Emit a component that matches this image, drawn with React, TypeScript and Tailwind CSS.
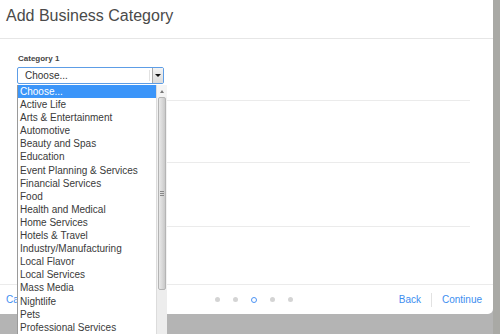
import React from 'react';

const categories = [
  'Active Life',
  'Arts & Entertainment',
  'Automotive',
  'Beauty and Spas',
  'Education',
  'Event Planning & Services',
  'Financial Services',
  'Food',
  'Health and Medical',
  'Home Services',
  'Hotels & Travel',
  'Industry/Manufacturing',
  'Local Flavor',
  'Local Services',
  'Mass Media',
  'Nightlife',
  'Pets',
  'Professional Services',
  'Public Services & Government',
  'Real Estate',
];

const Dots: React.FC = () => (
  <div className="flex items-center gap-[13px]">
    <span className="w-[5px] h-[5px] rounded-full bg-[#d4d4d4]" />
    <span className="w-[5px] h-[5px] rounded-full bg-[#d4d4d4]" />
    <span className="w-[6px] h-[6px] rounded-full border border-[#4d94f5]" />
    <span className="w-[5px] h-[5px] rounded-full bg-[#d4d4d4]" />
    <span className="w-[5px] h-[5px] rounded-full bg-[#d4d4d4]" />
  </div>
);

const Dropdown: React.FC = () => (
  <div className="absolute left-[17px] top-[85px] w-[150px] h-[260px] flex bg-white border-l border-[#9a9a9a]">
    <div className="w-[139px] flex flex-col">
      <div className="h-[13.1px] leading-[13.1px] pl-[2px] bg-[#3b95f9] text-white">Choose...</div>
      {categories.map((c) => (
        <div key={c} className="h-[13.1px] leading-[13.1px] pl-[2px] text-[#3a3a3a] whitespace-nowrap">
          {c}
        </div>
      ))}
    </div>
    <div className="w-[11px] flex flex-col bg-[#f1f1f1] border-l border-[#dcdcdc]">
      <div className="h-[12px] flex items-center justify-center bg-[#f4f4f4]">
        <span className="w-0 h-0 border-l-[2px] border-r-[2px] border-b-[3px] border-l-transparent border-r-transparent border-b-[#777]" />
      </div>
      <div className="h-[193px] mx-[1px] rounded-[2px] border border-[#b4b4b4] bg-gradient-to-r from-[#e9e9e9] via-[#dadada] to-[#c9c9c9] flex flex-col items-center justify-center gap-[1px]">
        <span className="w-[4px] h-px bg-[#888]" />
        <span className="w-[4px] h-px bg-[#888]" />
        <span className="w-[4px] h-px bg-[#888]" />
      </div>
      <div className="flex-1 bg-[#ededed]" />
    </div>
  </div>
);

export default function App() {
  return (
    <div
      className="w-[500px] h-[334px] bg-[#b4b4b4] flex overflow-hidden relative text-[10px]"
      style={{ fontFamily: '"Liberation Sans", Arial, sans-serif' }}
    >
      <div className="w-[493px] h-[314px] bg-white rounded-br-[5px] flex flex-col relative shrink-0">
        <div className="h-[39px] border-b border-[#e6e6e6] pl-[6px] pt-[6px] text-[16px] leading-[20px] text-[#4a4a4a]">
          Add Business Category
        </div>
        <div className="flex flex-col pl-[17px] pr-[23px]">
          <div className="h-[62px] border-b border-[#ebebeb] pt-[15px]">
            <div className="text-[8px] leading-[10px] font-bold text-[#444] pl-px">Category 1</div>
            <div className="mt-[3px] w-[147px] h-[17px] border border-[#5d9de6] rounded-[2px] flex items-center bg-white">
              <span className="flex-1 pl-[7px] text-[#333] leading-[14px]">Choose...</span>
              <span className="w-px h-[11px] bg-[#e2e2e2] mr-[2px]" />
              <span className="w-[11px] h-[15px] flex items-center justify-center bg-gradient-to-b from-[#f3f3f3] to-[#dcdcdc] border-l border-[#a8a8a8]">
                <span className="w-0 h-0 border-l-[3px] border-r-[3px] border-t-[3px] border-l-transparent border-r-transparent border-t-[#111]" />
              </span>
            </div>
          </div>
          <div className="h-[62px] border-b border-[#ebebeb]" />
          <div className="h-[64px] border-b border-[#ebebeb]" />
          <div className="h-[57px]" />
        </div>
        <div className="h-[30px] border-t border-[#ebebeb] flex items-center pl-[6px] pr-[11px] text-[10px] text-[#3d8ef0]">
          <span className="w-[100px]">Cancel</span>
          <div className="flex-1 flex justify-center pl-[3px]">
            <Dots />
          </div>
          <div className="flex items-center">
            <span>Back</span>
            <span className="w-px h-[14px] bg-[#e2e2e2] mx-[10px]" />
            <span>Continue</span>
          </div>
        </div>
        <Dropdown />
      </div>
      <div className="flex-1 h-full bg-[#a9a9a5]" />
    </div>
  );
}
